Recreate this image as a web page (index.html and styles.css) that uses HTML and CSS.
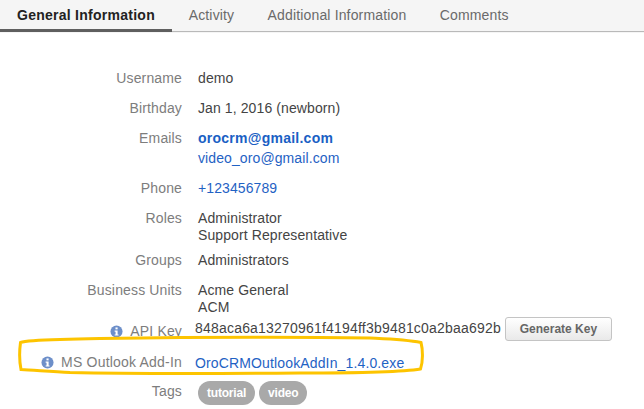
FILE: index.html
```html
<!DOCTYPE html>
<html lang="en">
<head>
<meta charset="utf-8">
<title>User details</title>
<link rel="stylesheet" href="styles.css">
</head>
<body>
<nav class="tabs">
  <a class="tab active">General Information</a>
  <a class="tab">Activity</a>
  <a class="tab">Additional Information</a>
  <a class="tab">Comments</a>
</nav>
<main class="details">
  <div class="row r-user"><div class="label">Username</div><div class="value">demo</div></div>
  <div class="row r-birth"><div class="label">Birthday</div><div class="value">Jan 1, 2016 (newborn)</div></div>
  <div class="row r-email"><div class="label">Emails</div><div class="value"><a class="link primary">orocrm@gmail.com</a><a class="link second">video_oro@gmail.com</a></div></div>
  <div class="row r-phone"><div class="label">Phone</div><div class="value"><a class="link">+123456789</a></div></div>
  <div class="row r-roles"><div class="label">Roles</div><div class="value tight">Administrator<br>Support Representative</div></div>
  <div class="row r-groups"><div class="label">Groups</div><div class="value">Administrators</div></div>
  <div class="row r-bu"><div class="label">Business Units</div><div class="value tight">Acme General<br>ACM</div></div>
  <div class="row r-api">
    <div class="label low"><svg class="info" viewBox="0 0 14 14"><circle cx="7" cy="7" r="6.5" fill="#6d8fc9"/><rect x="5.9" y="2.6" width="2.3" height="2.1" fill="#fff"/><path d="M5 6h3.2v4.1h1v1.3H5v-1.3h1V7.2H5z" fill="#fff"/></svg>API Key</div>
    <div class="value api"><span class="key">848aca6a13270961f4194ff3b9481c0a2baa692b</span><button class="btn">Generate Key</button></div>
  </div>
  <div class="row r-ms">
    <div class="label"><svg class="info" viewBox="0 0 14 14"><circle cx="7" cy="7" r="6.5" fill="#6d8fc9"/><rect x="5.9" y="2.6" width="2.3" height="2.1" fill="#fff"/><path d="M5 6h3.2v4.1h1v1.3H5v-1.3h1V7.2H5z" fill="#fff"/></svg>MS Outlook Add-In</div>
    <div class="value ms"><a class="link">OroCRMOutlookAddIn_1.4.0.exe</a></div>
  </div>
  <div class="row r-tags"><div class="label">Tags</div><div class="value tags"><span class="tag">tutorial</span><span class="tag">video</span></div></div>
</main>
<svg class="mark" viewBox="0 0 644 409" aria-hidden="true"><path d="M60 339.500C40 340 26 340.500 20.500 342.500C19.500 350 19.500 362 21 369.500C34 370.500 52 371 70 372.500C140 374 230 373.500 300 373C350 373 400 372.500 420.500 369C423 362 423 350 421 342.500C405 339.500 385 338.800 370 338C310 337.200 180 337.500 100 338.500C85 338.700 72 339 60 339.500Z" fill="none" stroke="#fdc400" stroke-width="3"/></svg>
</body>
</html>
```
FILE: styles.css
```css
html, body { margin: 0; padding: 0; }
body {
  position: relative;
  width: 644px;
  height: 409px;
  overflow: hidden;
  background: #fff;
  font-family: "Liberation Sans", Arial, sans-serif;
  font-size: 14px;
  color: #444;
  letter-spacing: 0.1px;
}
.tabs {
  display: flex;
  height: 33px;
  box-sizing: border-box;
  background: #f5f5f5;
  position: relative;
}
.tabs::after {
  content: "";
  position: absolute;
  left: 0;
  right: 0;
  top: 31px;
  height: 1px;
  background: #b9b9b9;
}
.tab {
  box-sizing: border-box;
  height: 32px;
  padding: 7px 16.700px 0;
  color: #6a6a6a;
  line-height: 16px;
  position: relative;
  z-index: 1;
  letter-spacing: 0.15px;
}
.tab.active {
  width: 172px;
  padding-left: 17px;
  font-weight: bold;
  color: #222;
  border-bottom: 3px solid #5f5f5f;
  white-space: nowrap;
  letter-spacing: 0.26px;
}
.details { display: flex; flex-direction: column; padding-top: 37px; }
.row { display: flex; gap: 16px; line-height: 17px; }
.label { width: 182px; flex: none; color: #7d7d7d; display: flex; justify-content: flex-end; align-items: center; align-self: flex-start; height: 17px; white-space: nowrap; letter-spacing: 0.15px; }
.value { color: #444; white-space: nowrap; }
.link { color: #1f62c4; display: block; }
.primary { font-weight: bold; color: #1a5fc4; letter-spacing: 0.25px; }
.second { margin-top: 3px; }
.r-birth, .r-email, .r-phone, .r-roles { margin-top: 13px; }
.r-groups { margin-top: 8px; }
.r-bu { margin-top: 13px; }
.r-api { margin-top: 4px; height: 24px; }
.r-ms { margin-top: 10px; }
.r-tags { margin-top: 11px; }
.label.low { margin-top: 3px; }
.info { width: 13px; height: 13px; margin-right: 7px; flex: none; }
.r-ms .label { letter-spacing: 0.2px; padding-left: 1px; box-sizing: border-box; }
.api { display: flex; align-items: flex-start; margin-left: -3px; }
.key { letter-spacing: 0.2px; }
.ms { margin-left: -3px; margin-top: 1px; letter-spacing: 0.14px; }
.btn {
  font: bold 12px "Liberation Sans", Arial, sans-serif;
  color: #666;
  width: 107px;
  height: 24px;
  margin: -3px 0 0 4px;
  padding: 0;
  border: 1px solid #c4c4c4;
  border-radius: 3px;
  background: linear-gradient(#fff, #e9e9e9);
}
.tags { display: flex; gap: 4px; margin-top: -2px; }
.tag {
  background: #a9a9a9;
  color: #fff;
  font-weight: bold;
  font-size: 12px;
  line-height: 24px;
  height: 24px;
  padding: 0 9px;
  border-radius: 12px;
  letter-spacing: -0.2px;
}
.mark { position: absolute; left: 0; top: 0; width: 644px; height: 409px; pointer-events: none; }
```
